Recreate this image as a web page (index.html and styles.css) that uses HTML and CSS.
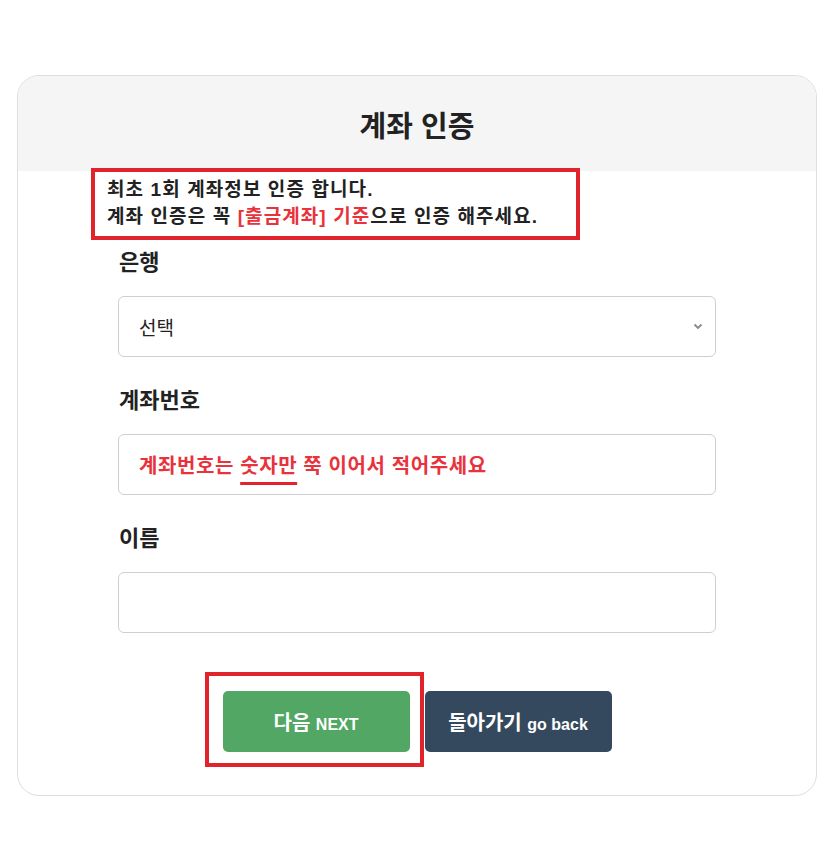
FILE: index.html
```html
<!DOCTYPE html>
<html lang="ko">
<head>
  <meta charset="UTF-8" />
  <meta name="viewport" content="width=device-width, initial-scale=1" />
  <title>계좌 인증</title>
  <link rel="stylesheet" href="styles.css">
</head>
<body>
  <div class="card">
    <div class="card-head">
      <h1>계좌 인증</h1>
    </div>

    <!-- notice box, highlighted in red -->
    <div class="notice">
      <p>최초 1회 계좌정보 인증 합니다.</p>
      <p>계좌 인증은 꼭 <span class="red">[출금계좌] 기준</span>으로 인증 해주세요.</p>
    </div>

    <form class="form">
      <div class="field">
        <label>은행</label>
        <div class="control select">
          <span>선택</span>
          <svg class="chev" width="10" height="7" viewBox="0 0 10 7">
            <path d="M1.5 1.5 L5 5 L8.5 1.5" fill="none" stroke="#888" stroke-width="1.8" />
          </svg>
        </div>
      </div>
      <div class="field">
        <label>계좌번호</label>
        <div class="control hint">
          <span>계좌번호는 <span class="mark">숫자만</span> 쭉 이어서 적어주세요</span>
        </div>
      </div>
      <div class="field">
        <label>이름</label>
        <div class="control"></div>
      </div>

      <div class="actions">
        <button type="button" class="btn btn-next">다음 <small>NEXT</small></button>
        <button type="button" class="btn btn-back">돌아가기 <small>go back</small></button>
      </div>
    </form>
  </div>
</body>
</html>
```

FILE: styles.css
```css
/* Page */
body {
  margin: 0;
  padding: 75px 0 40px 17px;
  font-family: "Liberation Sans", "Noto Sans CJK KR", sans-serif;
  color: #222;
  background: #fff;
}
.card {
  width: 798px;
  border: 1px solid #dedede;
  border-radius: 22px;
  overflow: hidden;
  background: #fff;
}
.card-head {
  height: 95px;
  background: #f5f5f5;
  display: flex;
  align-items: center;
  justify-content: center;
}
h1 {
  margin: 0;
  font-size: 29px;
  font-weight: bold;
  color: #222;
}
/* Notice */
.notice {
  position: relative;
  width: 469px;
  margin: -3px 0 0 73px;
  padding: 4px 0 6px 12px;
  border: 4px solid #e1232c;
  background: #fff;
}
.notice p {
  margin: 0;
  font-size: 19px;
  line-height: 27px;
  letter-spacing: 1.1px;
  font-weight: bold;
  color: #222;
  white-space: nowrap;
}
.red {
  color: #e8333c;
}
/* Form */
.form {
  padding: 9px 100px 43px 100px;
}
.field + .field {
  margin-top: 30px;
}
label {
  display: block;
  font-size: 22px;
  line-height: 28px;
  font-weight: bold;
  margin: 0 0 19px 1px;
}
.control {
  height: 61px;
  box-sizing: border-box;
  border: 1px solid #cfcfcf;
  border-radius: 6px;
  padding: 0 20px;
  display: flex;
  align-items: center;
  font-size: 19px;
}
.select {
  justify-content: space-between;
  padding-right: 12px;
  color: #222;
}
.hint {
  color: #e8333c;
  font-weight: bold;
  font-size: 20px;
  letter-spacing: 0.6px;
}
.mark {
  text-decoration: underline;
  text-decoration-color: #e1232c;
  text-decoration-thickness: 3px;
  text-underline-offset: 9px;
}
/* Buttons */
.actions {
  margin-top: 58px;
  display: flex;
  justify-content: center;
  gap: 15px;
}
.btn {
  width: 187px;
  height: 61px;
  border: 0;
  border-radius: 5px;
  color: #fff;
  font-family: inherit;
  font-size: 20px;
  font-weight: bold;
  cursor: pointer;
}
.btn small {
  font-size: 16px;
}
.btn-next {
  position: relative;
  background: #52a765;
}
/* red highlight around the next button */
.btn-next::after {
  content: "";
  position: absolute;
  left: -18px;
  top: -19px;
  right: -14px;
  bottom: -15px;
  border: 4px solid #e1232c;
}
.btn-back {
  background: #34495e;
}
```
